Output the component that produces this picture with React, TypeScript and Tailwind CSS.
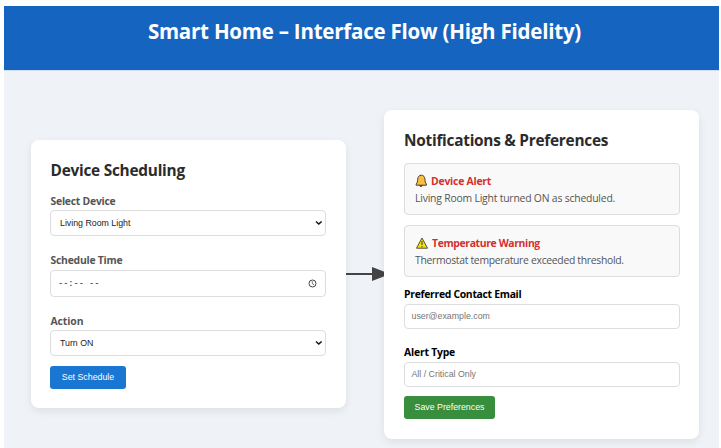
import React from "react";

function Chevron() {
  return (
    <svg width="8" height="6" viewBox="0 0 8 6" className="shrink-0">
      <path d="M1 1.5 L3.8 4 L6.6 1.5" fill="none" stroke="#111" strokeWidth="1.5" />
    </svg>
  );
}

function Clock() {
  return (
    <svg width="9" height="9" viewBox="0 0 9 9" className="shrink-0">
      <circle cx="4.5" cy="4.5" r="3.5" fill="none" stroke="#444" strokeWidth="1" />
      <path d="M4.3 2.2 V4.7 L6 5.7" fill="none" stroke="#555" strokeWidth="0.8" />
    </svg>
  );
}

function Bell() {
  return (
    <svg width="12" height="14" viewBox="0 0 12 14" className="shrink-0">
      <path d="M4.4 11.4 Q6 13.8 7.6 11.4 Z" fill="#444" stroke="#333" strokeWidth="0.8" />
      <path
        d="M6.3 1.2 C4 1.2 2.8 2.9 2.7 5.2 C2.6 7.8 2.2 8.8 1.2 10 V11.2 H11.4 V10 C10.4 8.8 10 7.8 9.9 5.2 C9.8 2.9 8.6 1.2 6.3 1.2 Z"
        fill="#fdbd3c"
        stroke="#45403a"
        strokeWidth="1"
        strokeLinejoin="round"
      />
    </svg>
  );
}

function Warning() {
  return (
    <svg width="13" height="12" viewBox="0 0 13 12" className="shrink-0">
      <path d="M7 1 L12.5 11.2 H1.5 Z" fill="#f5e400" stroke="#50503c" strokeWidth="1" strokeLinejoin="round" />
      <path d="M7 4 V8 M7 9 V10.2" stroke="#444" strokeWidth="1.1" />
    </svg>
  );
}

const box = "flex items-center rounded-[4px] border border-[#dddddd] bg-white";
const ui = "font-['Liberation_Sans',Arial,sans-serif]";

function Label({ children, className }: { children: React.ReactNode; className: string }) {
  return <div className={`h-4 whitespace-nowrap text-[10.4px] leading-4 font-bold ${className}`}>{children}</div>;
}

function Select({ value }: { value: string }) {
  return (
    <div className={`${box} ${ui} h-[26px] justify-between pr-[2px] pl-[9px] text-[8.8px] text-[#222]`}>
      <span className="mt-[2px]">{value}</span>
      <Chevron />
    </div>
  );
}

function Notice({ icon, title, text, titleClass, textClass }: {
  icon: React.ReactNode;
  title: string;
  text: string;
  titleClass: string;
  textClass: string;
}) {
  return (
    <div className="h-[52px] rounded-[4px] border border-[#dddddd] bg-[#f9f9f9] px-[10px] pt-[9px]">
      <div className="flex h-4 items-center gap-[4px]">
        {icon}
        <span className={`whitespace-nowrap text-[10.4px] leading-4 font-bold text-[#d32f2f] ${titleClass}`}>{title}</span>
      </div>
      <div className={`mt-px h-4 whitespace-nowrap text-[10.4px] leading-4 text-[#555] ${textClass}`}>{text}</div>
    </div>
  );
}

const card = "flex flex-col rounded-[8px] bg-white shadow-[0_3px_8px_rgba(0,0,0,0.08)]";

export default function App() {
  return (
    <div className="h-[448px] w-[721px] overflow-hidden bg-white pt-[6px] pr-[2px] pl-[4px] font-['Open_Sans','Noto_Sans',sans-serif]">
      <header className="flex h-16 justify-center bg-[#1565c0] pt-[9px] pl-[6px]">
        <h1 className="h-8 whitespace-nowrap text-[20.5px] leading-8 font-bold tracking-[-0.22px] text-white">
          Smart Home – Interface Flow (High Fidelity)
        </h1>
      </header>
      <main className="flex h-[378px] items-start border-t border-[#cfddee] bg-[#eff3f8] pl-[27px]">
        <section className={`${card} mt-[69px] h-[268px] w-[315px] pt-[19px] pr-5 pl-[19px]`}>
          <h2 className="h-6 pl-[0.5px] whitespace-nowrap text-[15.4px] leading-6 font-bold tracking-[-0.25px] text-[#2b2b2b]">Device Scheduling</h2>
          <Label className="mt-[10px] mb-px pl-[0.5px] tracking-[-0.24px] text-[#555]">Select Device</Label>
          <Select value="Living Room Light" />
          <Label className="mt-[16px] mb-px pl-[0.5px] tracking-[-0.24px] text-[#555]">Schedule Time</Label>
          <div className={`${box} mt-px h-[27px] justify-between pr-[8px] pl-[7px]`}>
            <span className="mt-[2px] font-['Liberation_Mono',monospace] text-[8.8px] tracking-[-0.1px] whitespace-pre text-[#222]">--:-- --</span>
            <Clock />
          </div>
          <Label className="mt-[16px] mb-px pl-[0.5px] tracking-[-0.1px] text-[#555]">Action</Label>
          <Select value="Turn ON" />
          <button className={`${ui} mt-[10px] h-[23px] w-[76px] rounded-[3px] bg-[#1976d2] text-[8.8px] text-white`}>Set Schedule</button>
        </section>
        <svg width="39" height="16" viewBox="0 0 39 16" className="mt-[195px] shrink-0">
          <path d="M0 8 H27" stroke="#444" strokeWidth="2" />
          <path d="M26 1 L39 6 V10 L26 15 Z" fill="#444" />
        </svg>
        <section className={`${card} -ml-px mt-[39px] h-[329px] w-[315px] pt-[19px] pr-[19px] pl-5`}>
          <h2 className="h-6 whitespace-nowrap text-[15.4px] leading-6 font-bold tracking-[-0.26px] text-[#2b2b2b]">Notifications &amp; Preferences</h2>
          <div className="mt-[10px] flex flex-col gap-[10px]">
            <Notice icon={<Bell />} title="Device Alert" text="Living Room Light turned ON as scheduled." titleClass="tracking-[-0.22px]" textClass="tracking-[-0.2px]" />
            <Notice icon={<Warning />} title="Temperature Warning" text="Thermostat temperature exceeded threshold." titleClass="tracking-[-0.36px]" textClass="tracking-[-0.31px]" />
          </div>
          <Label className="mt-[9px] mb-[2px] tracking-[-0.3px] text-black">Preferred Contact Email</Label>
          <div className={`${box} ${ui} h-[25px] pt-px pl-[6.5px] text-[8.8px] text-[#757575]`}>user@example.com</div>
          <Label className="mt-[15px] mb-[2px] tracking-[-0.2px] text-black">Alert Type</Label>
          <div className={`${box} ${ui} h-[25px] pt-px pl-[6.5px] text-[8.8px] text-[#757575]`}>All / Critical Only</div>
          <button className={`${ui} mt-[9px] h-[23px] w-[91px] rounded-[3px] bg-[#388e3c] pt-px text-[8.8px] text-white`}>Save Preferences</button>
        </section>
      </main>
    </div>
  );
}
